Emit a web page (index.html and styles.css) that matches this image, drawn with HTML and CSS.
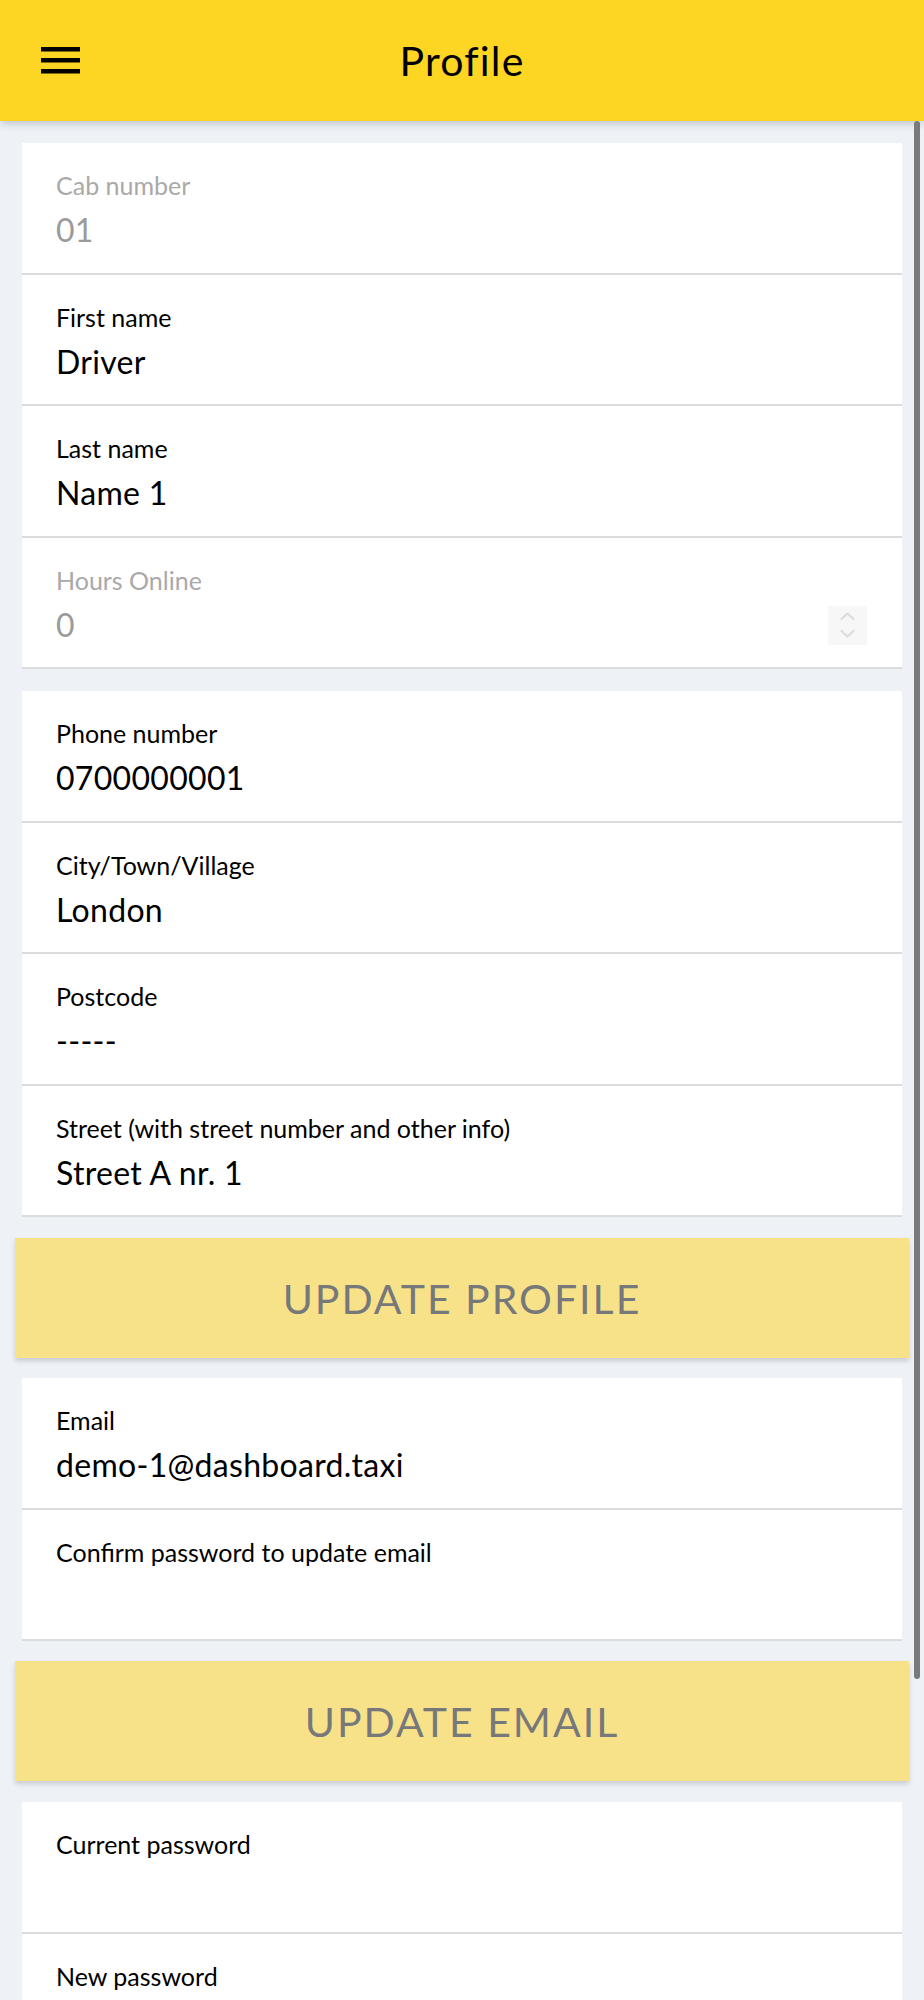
FILE: index.html
```html
<!DOCTYPE html>
<html lang="en">
<head>
<meta charset="utf-8">
<title>Profile</title>
<link rel="stylesheet" href="styles.css">
</head>
<body>
<header class="topbar">
  <button class="menu-btn" aria-label="Menu">
    <svg width="39" height="27" viewBox="0 0 39 27"><rect x="0" y="0" width="39" height="4.5" fill="#000"/><rect x="0" y="11" width="39" height="4.5" fill="#000"/><rect x="0" y="22" width="39" height="4.5" fill="#000"/></svg>
  </button>
  <h1 class="title">Profile</h1>
</header>
<div class="scroll-thumb"></div>
<main class="content">
  <section class="card">
    <div class="field disabled">
      <div class="label">Cab number</div>
      <div class="value">01</div>
    </div>
    <div class="field">
      <div class="label">First name</div>
      <div class="value">Driver</div>
    </div>
    <div class="field">
      <div class="label">Last name</div>
      <div class="value">Name 1</div>
    </div>
    <div class="field disabled">
      <div class="label">Hours Online</div>
      <div class="value value-row">
        <span>0</span>
        <span class="spinner">
          <svg width="39" height="39" viewBox="0 0 39 39"><path d="M13.5 13 L19.5 7.5 L25.5 13" fill="none" stroke="#dcdcdc" stroke-width="2.2" stroke-linecap="round" stroke-linejoin="round"/><path d="M13.5 25 L19.5 30.5 L25.5 25" fill="none" stroke="#dcdcdc" stroke-width="2.2" stroke-linecap="round" stroke-linejoin="round"/></svg>
        </span>
      </div>
    </div>
  </section>

  <section class="card">
    <div class="field">
      <div class="label">Phone number</div>
      <div class="value">0700000001</div>
    </div>
    <div class="field">
      <div class="label">City/Town/Village</div>
      <div class="value">London</div>
    </div>
    <div class="field">
      <div class="label">Postcode</div>
      <div class="value">-----</div>
    </div>
    <div class="field">
      <div class="label">Street (with street number and other info)</div>
      <div class="value">Street A nr. 1</div>
    </div>
  </section>

  <button class="action-btn btn-first">UPDATE PROFILE</button>

  <section class="card card-after-btn">
    <div class="field">
      <div class="label">Email</div>
      <div class="value">demo-1@dashboard.taxi</div>
    </div>
    <div class="field">
      <div class="label">Confirm password to update email</div>
      <div class="value"></div>
    </div>
  </section>

  <button class="action-btn">UPDATE EMAIL</button>

  <section class="card card-last">
    <div class="field">
      <div class="label">Current password</div>
      <div class="value"></div>
    </div>
    <div class="field">
      <div class="label">New password</div>
      <div class="value"></div>
    </div>
  </section>
</main>
</body>
</html>
```
FILE: styles.css
```css
html, body {
  margin: 0;
  padding: 0;
  overflow: hidden;
  height: 2000px;
}

body {
  background: #eef2f7;
  font-family: Lato, "Open Sans", sans-serif;
  color: #000;
  position: relative;
}

.topbar {
  position: relative;
  z-index: 2;
  height: 121px;
  background: #fdd523;
  box-shadow: 0 2px 9px rgba(0, 0, 0, 0.22);
  display: flex;
  align-items: center;
  justify-content: center;
}

.menu-btn {
  position: absolute;
  left: 41px;
  top: 47px;
  padding: 0;
  margin: 0;
  border: 0;
  background: none;
  line-height: 0;
}

.title {
  margin: 0;
  font-weight: 400;
  font-size: 41px;
  line-height: 48px;
  letter-spacing: 1.2px;
}

.scroll-thumb {
  position: absolute;
  z-index: 3;
  left: 914px;
  top: 121px;
  width: 6px;
  height: 1558px;
  background: #797a7a;
  border-radius: 3px;
}

.content {
  display: flex;
  flex-direction: column;
  padding-top: 22px;
}

.card {
  background: #fff;
  margin: 0 22px 22px;
}

.card-after-btn {
  margin-top: 20px;
  margin-bottom: 20px;
}

.card-last {
  margin-top: 21px;
}

.field {
  padding: 28px 34px 22.5px 34px;
  border-bottom: 2px solid #dcdcdc;
}

.label {
  font-size: 25px;
  line-height: 28px;
  margin-bottom: 11px;
}

.value {
  font-size: 32px;
  line-height: 40px;
  height: 40px;
  letter-spacing: 0.3px;
}

.disabled .label {
  color: #a9a9a9;
}

.disabled .value {
  color: #9a9a9a;
}

.value-row {
  display: flex;
  justify-content: space-between;
  align-items: center;
}

.spinner {
  width: 39px;
  height: 39px;
  background: #f7f7f7;
  line-height: 0;
  margin-top: 2px;
  margin-right: 1px;
}

.action-btn {
  margin: 0 15px;
  height: 120px;
  border: 0;
  background: #f7e28a;
  color: #77787a;
  font-family: Lato, "Open Sans", sans-serif;
  font-size: 41px;
  letter-spacing: 2px;
  box-shadow: 0 3px 5px rgba(0, 0, 0, 0.16);
  padding: 0;
}

.btn-first {
  margin-top: -1px;
}
```
